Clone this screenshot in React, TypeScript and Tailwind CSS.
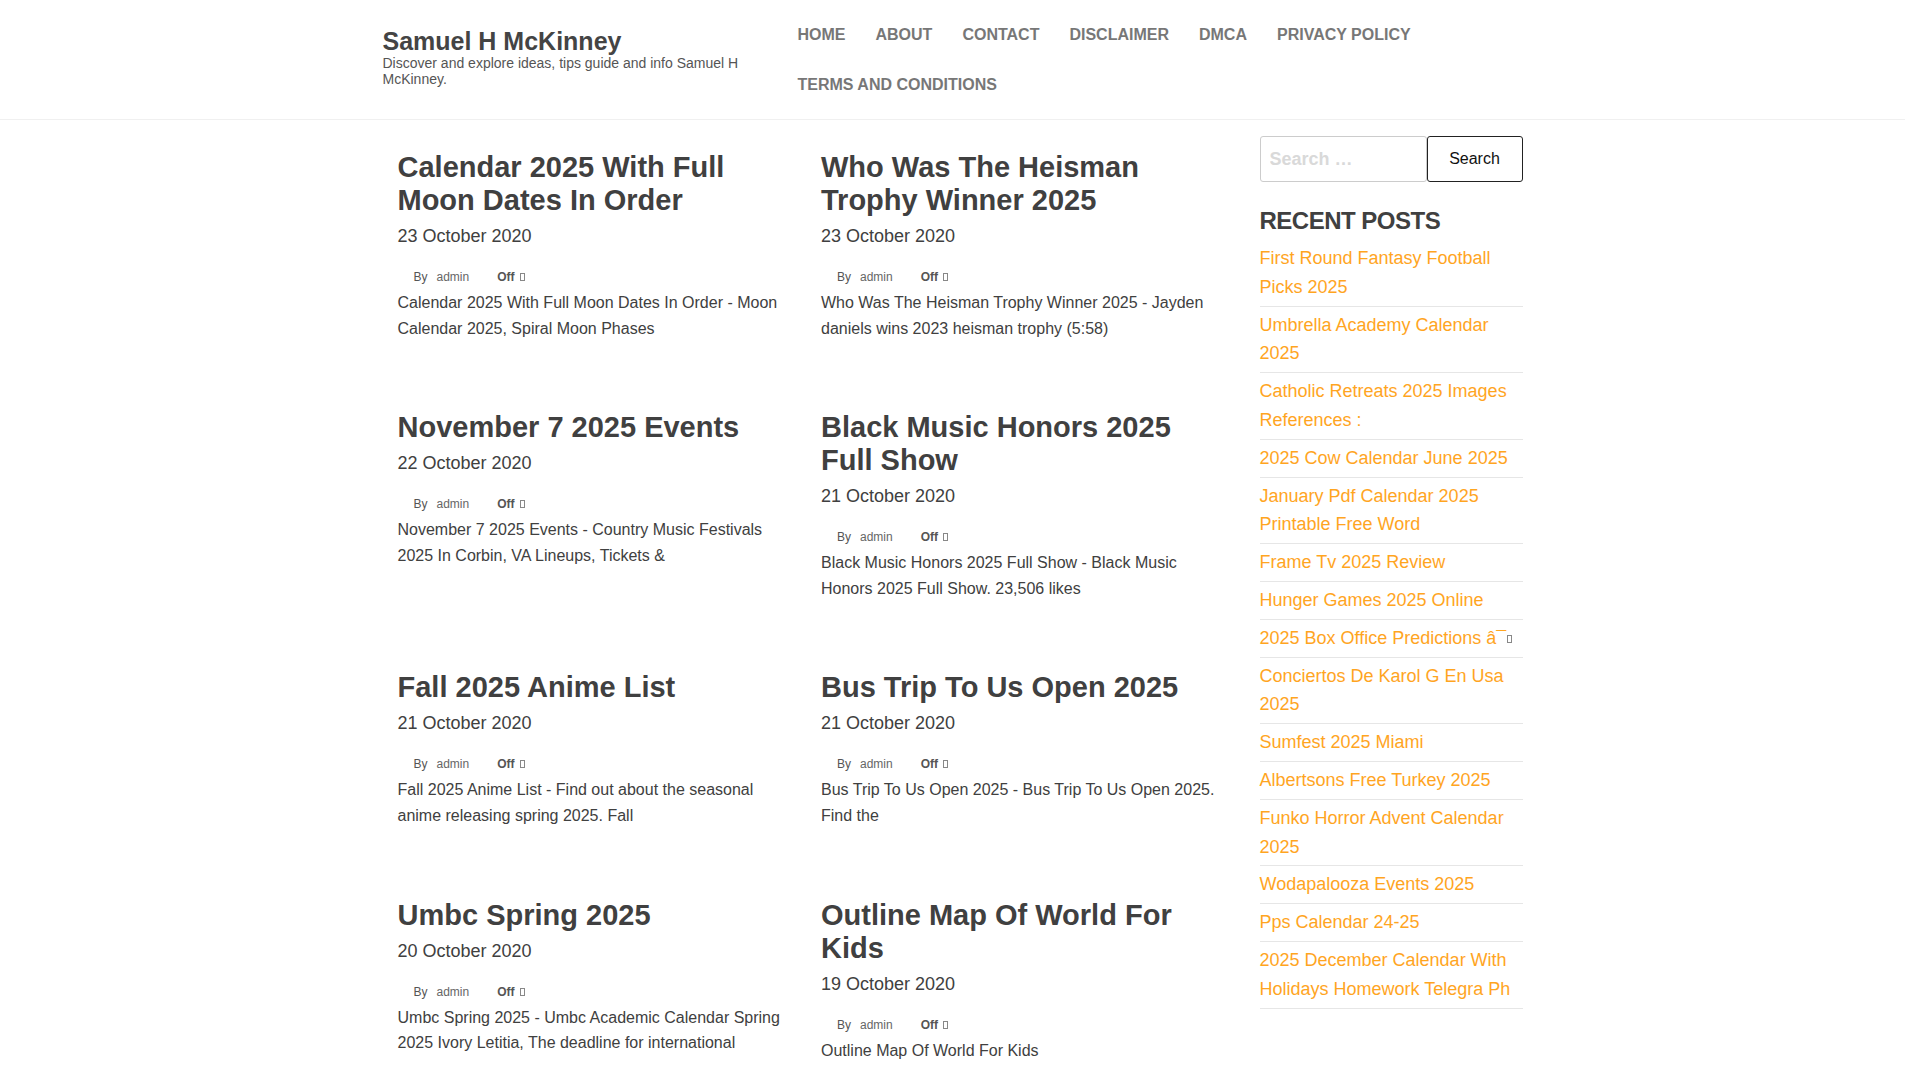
import React from 'react';

interface Post {
  title: string;
  date: string;
  excerpt: string;
}

const navItems = ['Home', 'About', 'Contact', 'Disclaimer', 'DMCA', 'Privacy Policy', 'Terms and Conditions'];

const posts: Post[] = [
  { title: 'Calendar 2025 With Full Moon Dates In Order', date: '23 October 2020', excerpt: 'Calendar 2025 With Full Moon Dates In Order - Moon Calendar 2025, Spiral Moon Phases' },
  { title: 'Who Was The Heisman Trophy Winner 2025', date: '23 October 2020', excerpt: 'Who Was The Heisman Trophy Winner 2025 - Jayden daniels wins 2023 heisman trophy (5:58)' },
  { title: 'November 7 2025 Events', date: '22 October 2020', excerpt: 'November 7 2025 Events - Country Music Festivals 2025 In Corbin, VA Lineups, Tickets &' },
  { title: 'Black Music Honors 2025 Full Show', date: '21 October 2020', excerpt: 'Black Music Honors 2025 Full Show - Black Music Honors 2025 Full Show. 23,506 likes' },
  { title: 'Fall 2025 Anime List', date: '21 October 2020', excerpt: 'Fall 2025 Anime List - Find out about the seasonal anime releasing spring 2025. Fall' },
  { title: 'Bus Trip To Us Open 2025', date: '21 October 2020', excerpt: 'Bus Trip To Us Open 2025 - Bus Trip To Us Open 2025. Find the' },
  { title: 'Umbc Spring 2025', date: '20 October 2020', excerpt: 'Umbc Spring 2025 - Umbc Academic Calendar Spring 2025 Ivory Letitia, The deadline for international' },
  { title: 'Outline Map Of World For Kids', date: '19 October 2020', excerpt: 'Outline Map Of World For Kids' },
];

const recentPosts = [
  'First Round Fantasy Football Picks 2025',
  'Umbrella Academy Calendar 2025',
  'Catholic Retreats 2025 Images References :',
  '2025 Cow Calendar June 2025',
  'January Pdf Calendar 2025 Printable Free Word',
  'Frame Tv 2025 Review',
  'Hunger Games 2025 Online',
  '2025 Box Office Predictions â¯',
  'Conciertos De Karol G En Usa 2025',
  'Sumfest 2025 Miami',
  'Albertsons Free Turkey 2025',
  'Funko Horror Advent Calendar 2025',
  'Wodapalooza Events 2025',
  'Pps Calendar 24-25',
  '2025 December Calendar With Holidays Homework Telegra Ph',
];

// stand-in for the glyph the icon font could not draw
const MissingGlyph = () => (
  <span className="inline-block w-[5px] h-[8px] border border-[#888] align-middle" />
);

const PostCard: React.FC<{ post: Post }> = ({ post }) => (
  <article className="px-[15px] pb-[70px]">
    <h2 className="text-[29px] font-bold leading-[33px] text-[#404040]">
      <a href="#">{post.title}</a>
    </h2>
    <div className="mt-[6px] text-[18px] leading-[26px] text-[#404040]">{post.date}</div>
    <div className="mt-[18px] flex items-center text-[12px] leading-[20px] text-[#555]">
      <span className="ml-[16px]">By</span>
      <a href="#" className="ml-[9px] text-[#666]">admin</a>
      <span className="ml-[28px] font-bold">Off</span>
      <span className="ml-[5px] flex items-center"><MissingGlyph /></span>
    </div>
    <p className="mt-[3px] text-[16px] leading-[25.6px] text-[#404040]">{post.excerpt}</p>
  </article>
);

export default function App() {
  return (
    <div className="bg-white pr-[15px] text-[#404040]" style={{ fontFamily: '"Liberation Sans", Arial, sans-serif' }}>
      <header className="border-b border-[#f0f0f0]">
        <div className="w-[1140px] mx-auto flex items-start pb-[9px]">
          <div className="w-[400px] shrink-0 pt-[27px] pr-[30px]">
            <a href="#" className="block text-[25px] font-bold leading-[28px] text-[#444]">Samuel H McKinney</a>
            <p className="text-[14px] leading-[16px] text-[#555]">
              Discover and explore ideas, tips guide and info Samuel H McKinney.
            </p>
          </div>
          <nav className="flex-1 flex flex-wrap pt-[10px]">
            {navItems.map((item) => (
              <a key={item} href="#" className="px-[15px] h-[50px] flex items-center text-[16px] font-bold uppercase text-[#777]">
                {item}
              </a>
            ))}
          </nav>
        </div>
      </header>

      <div className="w-[1140px] mx-auto flex pb-[220px]">
        <main className="w-[847px] shrink-0 pt-[31px]">
          <div className="grid grid-cols-2 items-start">
            {posts.map((post) => (
              <PostCard key={post.title} post={post} />
            ))}
          </div>
        </main>

        <aside className="ml-auto w-[263px] pt-[16px]">
          <form className="flex h-[46px]" onSubmit={(e) => e.preventDefault()}>
            <input
              type="search"
              placeholder="Search …"
              className="w-[167px] h-full border border-[#ccc] rounded-[3px] px-[9px] text-[18px] outline-none placeholder:text-[#d9d9d9] placeholder:font-bold"
            />
            <button type="submit" className="flex-1 h-full border border-[#222] rounded-[3px] bg-white text-[16px] text-[#111]">
              Search
            </button>
          </form>

          <h2 className="mt-[24px] mb-[5px] text-[24px] font-bold leading-[29px] tracking-[-0.5px] uppercase text-[#404040]">
            Recent Posts
          </h2>
          <ul>
            {recentPosts.map((item, i) => (
              <li key={i} className="py-[4px] border-b border-[#e6e6e6] text-[18px] leading-[28.8px]">
                <a href="#" className="text-[#ffa51f]">
                  {item}
                  {item.endsWith('â¯') && <span className="ml-[1px]"><MissingGlyph /></span>}
                </a>
              </li>
            ))}
          </ul>
        </aside>
      </div>
    </div>
  );
}
